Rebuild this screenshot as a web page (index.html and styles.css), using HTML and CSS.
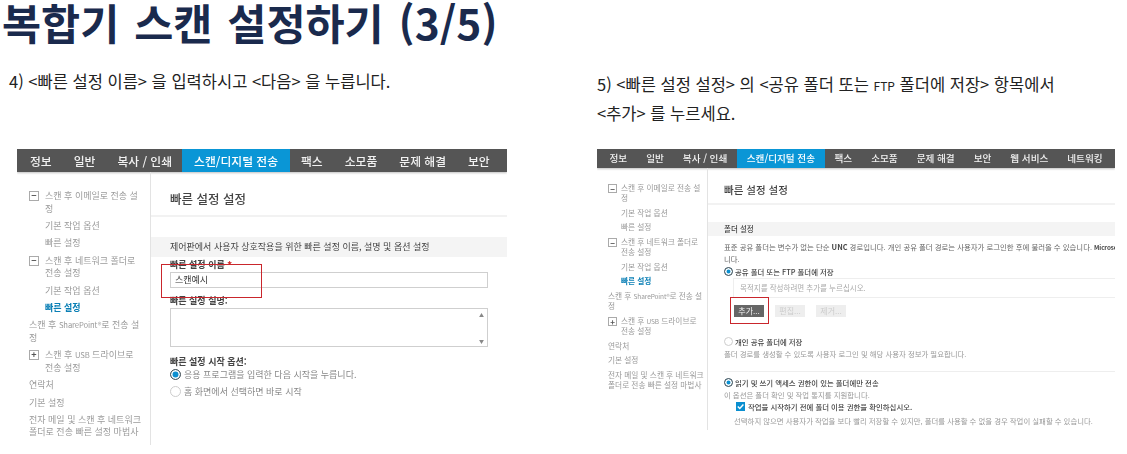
FILE: index.html
```html
<!DOCTYPE html>
<html lang="ko">
<head>
    <meta charset="UTF-8">
    <title>복합기 스캔 설정하기 (3/5)</title>
    <link rel="stylesheet" href="styles.css">
</head>
<body>
    <h1>복합기 스캔 설정하기 (3/5)</h1>
    <div class="steps">
        <section class="step step-left">
            <p class="caption">4) &lt;빠른 설정 이름&gt; 을 입력하시고 &lt;다음&gt; 을 누릅니다.</p>
            <div class="shot">
                <nav class="tabs">
                    <span class="tab">정보</span>
                    <span class="tab">일반</span>
                    <span class="tab">복사 / 인쇄</span>
                    <span class="tab active">스캔/디지털 전송</span>
                    <span class="tab">팩스</span>
                    <span class="tab">소모품</span>
                    <span class="tab">문제 해결</span>
                    <span class="tab">보안</span>
                </nav>
                <div class="shot-body">
                    <aside class="side">
                        <div class="side-item tree"><i class="box">−</i><span>스캔 후 이메일로 전송 설<br>정</span></div>
                        <div class="side-item sub">기본 작업 옵션</div>
                        <div class="side-item sub">빠른 설정</div>
                        <div class="side-item tree"><i class="box">−</i><span>스캔 후 네트워크 폴더로<br>전송 설정</span></div>
                        <div class="side-item sub">기본 작업 옵션</div>
                        <div class="side-item sub current">빠른 설정</div>
                        <div class="side-item">스캔 후 <span class="latin">SharePoint®</span>로 전송 설<br>정</div>
                        <div class="side-item tree"><i class="box">+</i><span>스캔 후 <span class="latin">USB</span> 드라이브로<br>전송 설정</span></div>
                        <div class="side-item">연락처</div>
                        <div class="side-item">기본 설정</div>
                        <div class="side-item">전자 메일 및 스캔 후 네트워크<br>폴더로 전송 빠른 설정 마법사</div>
                    </aside>
                    <main class="pane">
                        <h2 class="pane-title">빠른 설정 설정</h2>
                        <div class="band">제어판에서 사용자 상호작용을 위한 빠른 설정 이름, 설명 및 옵션 설정</div>
                        <div class="form">
                            <div class="field-label">빠른 설정 이름 <b class="req">*</b></div>
                            <div class="input">스캔예시</div>
                            <div class="field-label gap-desc">빠른 설정 설명:</div>
                            <div class="textarea"><span class="arrow">▲</span><span class="arrow">▼</span></div>
                            <div class="field-label gap-start">빠른 설정 시작 옵션:</div>
                            <div class="radio-row"><i class="radio on"></i>응용 프로그램을 입력한 다음 시작을 누릅니다.</div>
                            <div class="radio-row"><i class="radio"></i>홈 화면에서 선택하면 바로 시작</div>
                        </div>
                    </main>
                </div>
                <div class="mark mark-name"></div>
            </div>
        </section>

        <section class="step step-right">
            <p class="caption">5) &lt;빠른 설정 설정&gt; 의 &lt;공유 폴더 또는 <small>FTP</small> 폴더에 저장&gt; 항목에서<br>&lt;추가&gt; 를 누르세요.</p>
            <div class="shot">
                <nav class="tabs">
                    <span class="tab">정보</span>
                    <span class="tab">일반</span>
                    <span class="tab">복사 / 인쇄</span>
                    <span class="tab active">스캔/디지털 전송</span>
                    <span class="tab">팩스</span>
                    <span class="tab">소모품</span>
                    <span class="tab">문제 해결</span>
                    <span class="tab">보안</span>
                    <span class="tab">웹 서비스</span>
                    <span class="tab">네트워킹</span>
                </nav>
                <div class="shot-body">
                    <aside class="side">
                        <div class="side-item tree"><i class="box">−</i><span>스캔 후 이메일로 전송 설<br>정</span></div>
                        <div class="side-item sub">기본 작업 옵션</div>
                        <div class="side-item sub">빠른 설정</div>
                        <div class="side-item tree"><i class="box">−</i><span>스캔 후 네트워크 폴더로<br>전송 설정</span></div>
                        <div class="side-item sub">기본 작업 옵션</div>
                        <div class="side-item sub current">빠른 설정</div>
                        <div class="side-item">스캔 후 <span class="latin">SharePoint®</span>로 전송 설<br>정</div>
                        <div class="side-item tree"><i class="box">+</i><span>스캔 후 <span class="latin">USB</span> 드라이브로<br>전송 설정</span></div>
                        <div class="side-item">연락처</div>
                        <div class="side-item">기본 설정</div>
                        <div class="side-item">전자 메일 및 스캔 후 네트워크<br>폴더로 전송 빠른 설정 마법사</div>
                    </aside>
                    <main class="pane">
                        <h2 class="pane-title">빠른 설정 설정</h2>
                        <div class="band">폴더 설정</div>
                        <div class="form">
                            <p class="note intro">표준 공유 폴더는 변수가 없는 단순 <b>UNC</b> 경로입니다. 개인 공유 폴더 경로는 사용자가 로그인한 후에 불러올 수 있습니다. <b class="latin">Microsoft</b><br>니다.</p>
                            <div class="radio-row strong"><i class="radio on"></i>공유 폴더 또는 FTP 폴더에 저장</div>
                            <div class="dest">목적지를 작성하려면 추가를 누르십시오.</div>
                            <div class="buttons">
                                <span class="btn primary">추가...</span>
                                <span class="btn">편집...</span>
                                <span class="btn">제거...</span>
                            </div>
                            <div class="radio-row strong personal"><i class="radio"></i>개인 공유 폴더에 저장</div>
                            <p class="note">폴더 경로를 생성할 수 있도록 사용자 로그인 및 해당 사용자 정보가 필요합니다.</p>
                            <hr class="rule">
                            <div class="radio-row strong"><i class="radio on"></i>읽기 및 쓰기 액세스 권한이 있는 폴더에만 전송</div>
                            <p class="note">이 옵션은 폴더 확인 및 작업 통지를 지원합니다.</p>
                            <div class="check-row"><i class="check"><svg viewBox="0 0 10 10"><path d="M2 5l2.2 2.2L8.2 2.8" fill="none" stroke="#fff" stroke-width="1.6"/></svg></i>작업을 시작하기 전에 폴더 이용 권한을 확인하십시오.</div>
                            <p class="note indent">선택하지 않으면 사용자가 작업을 보다 빨리 저장할 수 있지만, 폴더를 사용할 수 없을 경우 작업이 실패할 수 있습니다.</p>
                        </div>
                    </main>
                </div>
                <div class="mark mark-add"></div>
            </div>
        </section>
    </div>
</body>
</html>
```

FILE: styles.css
```css
* {
    box-sizing: border-box;
}
html, body {
    height: 454px;
    overflow: hidden;
}
body {
    margin: 0;
    background: #fff;
    color: #222;
    font-family: "Noto Sans CJK KR", "Noto Sans", sans-serif;
}
h1 {
    margin: 0;
    padding-left: 2px;
    height: 66px;
    color: #1a2a4d;
    font-size: 42.5px;
    font-weight: 700;
    line-height: 43px;
    word-spacing: 3px;
    white-space: nowrap;
}
.steps {
    display: flex;
}
.step-left {
    width: 597px;
    padding-left: 17px;
}
.step-right {
    width: 518px;
}
.caption {
    margin: 0;
    color: #222;
    font-size: 16.5px;
    font-weight: 400;
    white-space: nowrap;
}
.step-left .caption {
    margin-left: -8px;
    height: 83px;
    line-height: 30px;
}
.step-right .caption {
    height: 83px;
    line-height: 29px;
    padding-top: 4px;
}
.caption small {
    font-size: 12px;
    line-height: 0;
}
.latin {
    font-size: 85%;
    letter-spacing: -0.1px;
}

.shot {
    position: relative;
    overflow: hidden;
    filter: blur(0.4px);
}
.step-left .shot {
    width: 490px;
    height: 296px;
}
.step-right .shot {
    width: 518px;
    height: 282px;
}

/* top tabs */
.tabs {
    display: flex;
    align-items: center;
    height: 23px;
    background: #555;
    box-shadow: 0 1px 2px rgba(0,0,0,0.25);
    padding-left: 3px;
}
.tab {
    padding: 0 10px;
    color: #f2f2f2;
    font-size: 11.8px;
    font-weight: 500;
    line-height: 23px;
    white-space: nowrap;
}
.tab.active {
    background: #0a96d6;
    color: #fff;
    padding: 0 12px;
}
.step-left .tab:nth-child(2) {
    padding: 0 12px 0 12px;
}
.step-left .tab:nth-child(3) {
    padding: 0 10px 0 10px;
}
.step-left .tab:nth-child(n+5) {
    padding: 0 11px 0 11px;
}
.step-right .tabs {
    height: 19px;
}
.step-right .tab {
    font-size: 9.6px;
    line-height: 19px;
    padding: 0 9.5px;
}
.step-right .tab.active {
    padding: 0 10px;
}

.shot-body {
    display: flex;
    align-items: stretch;
}
.step-left .shot-body {
    height: 273px;
}
.step-right .shot-body {
    height: 262px;
}

/* sidebar */
.side {
    flex: none;
    width: 134px;
    padding: 18px 0 0 12px;
    border-right: 1px solid #e3e3e3;
    color: #9a9a9a;
    font-size: 9px;
    line-height: 12.5px;
    white-space: nowrap;
}
.side-item {
    margin-bottom: 4.9px;
}
.side-item.tree {
    display: flex;
}
.side-item.sub {
    padding-left: 16px;
}
.side-item.current {
    color: #0a7fb5;
    font-weight: 700;
}
.box {
    flex: none;
    width: 10px;
    height: 10px;
    margin: 1px 6px 0 0;
    border: 1px solid #aaa;
    color: #555;
    font-size: 9px;
    font-style: normal;
    font-weight: 700;
    line-height: 8px;
    text-align: center;
}
.step-right .side {
    width: 111px;
    padding: 15px 0 0 11px;
    font-size: 7.7px;
    line-height: 10.4px;
}
.step-right .side-item {
    margin-bottom: 4.1px;
}
.step-right .side-item.sub {
    padding-left: 13px;
}
.step-right .box {
    width: 9px;
    height: 9px;
    margin-right: 4px;
    font-size: 8px;
    line-height: 7px;
}

/* main pane */
.pane {
    flex: 1;
    min-width: 0;
}
.pane-title {
    margin: 0;
    height: 45px;
    padding: 18px 0 0 19px;
    border-bottom: 2px solid #f2f2f2;
    color: #444;
    font-size: 12.5px;
    font-weight: 500;
    line-height: 18px;
}
.band {
    margin-top: 20px;
    height: 20px;
    padding-left: 19px;
    background: #f4f4f4;
    color: #444;
    font-size: 9px;
    line-height: 19px;
}
.form {
    padding-left: 19px;
    width: 337px;
    color: #555;
    font-size: 9px;
}
.field-label {
    color: #444;
    font-weight: 700;
    line-height: 13px;
    padding-top: 1px;
    height: 15px;
}
.req {
    color: #d03030;
}
.input {
    height: 16px;
    border: 1px solid #cfcfcf;
    padding-left: 4px;
    color: #333;
    line-height: 14px;
}
.gap-desc {
    margin-top: 5px;
}
.textarea {
    display: flex;
    flex-direction: column;
    justify-content: space-between;
    align-items: flex-end;
    height: 39px;
    padding: 2px 3px;
    border: 1px solid #cfcfcf;
}
.arrow {
    color: #888;
    font-size: 5px;
    line-height: 7px;
}
.gap-start {
    margin-top: 7px;
    height: 12px;
}
.radio-row {
    display: flex;
    align-items: center;
    height: 17px;
    color: #888;
    white-space: nowrap;
}
.radio {
    flex: none;
    width: 11px;
    height: 11px;
    margin-right: 3px;
    border: 1px solid #ccc;
    border-radius: 50%;
    background: #fff;
}
.radio.on {
    border-color: #555;
    box-shadow: inset 0 0 0 1.5px #fff;
    background: #0a8fd0;
}

/* right pane */
.step-right .pane-title {
    height: 37px;
    padding: 14px 0 0 16px;
    font-size: 10.5px;
    line-height: 16px;
}
.step-right .band {
    margin-top: 17px;
    height: 14px;
    padding-left: 16px;
    font-size: 7.5px;
    font-weight: 500;
    line-height: 14px;
}
.step-right .form {
    width: auto;
    padding-left: 16px;
    font-size: 7.4px;
}
.note {
    margin: 0;
    color: #999;
    line-height: 11px;
    white-space: nowrap;
}
.note b {
    color: #444;
}
.note.intro {
    padding-top: 5px;
    color: #666;
}
.note.indent {
    padding-left: 10px;
    padding-top: 2px;
}
.step-right .radio-row {
    height: 14px;
}
.step-right .radio {
    width: 9px;
    height: 9px;
    margin-right: 2px;
}
.radio-row.strong {
    color: #444;
    font-weight: 500;
}
.radio-row.personal {
    margin-top: 17px;
}
.dest {
    height: 20px;
    margin-left: 9px;
    padding-left: 6px;
    border: 1px solid #eee;
    border-right: 0;
    color: #aaa;
    font-size: 7.5px;
    line-height: 18px;
}
.buttons {
    display: flex;
    gap: 11px;
    margin: 7px 0 0 10px;
}
.btn {
    width: 30px;
    height: 12px;
    background: #eee;
    color: #ccc;
    font-size: 8px;
    line-height: 12px;
    text-align: center;
}
.btn.primary {
    background: #666;
    color: #f2f2f2;
}
.rule {
    margin: 12px 0 3px;
    border: 0;
    border-top: 1px solid #eee;
}
.check-row {
    display: flex;
    align-items: center;
    height: 13px;
    margin-left: 12px;
    color: #444;
    font-weight: 500;
    white-space: nowrap;
}
.check {
    flex: none;
    width: 9px;
    height: 9px;
    margin-right: 3px;
    background: #0a8fd0;
}
.check svg {
    display: block;
}

/* red highlight boxes drawn over the screenshot */
.mark {
    position: absolute;
    border: 1.5px solid #c9262c;
}
.mark-name {
    left: 144px;
    top: 115px;
    width: 101px;
    height: 34px;
}
.mark-add {
    left: 133px;
    top: 148px;
    width: 39px;
    height: 27px;
}
```
